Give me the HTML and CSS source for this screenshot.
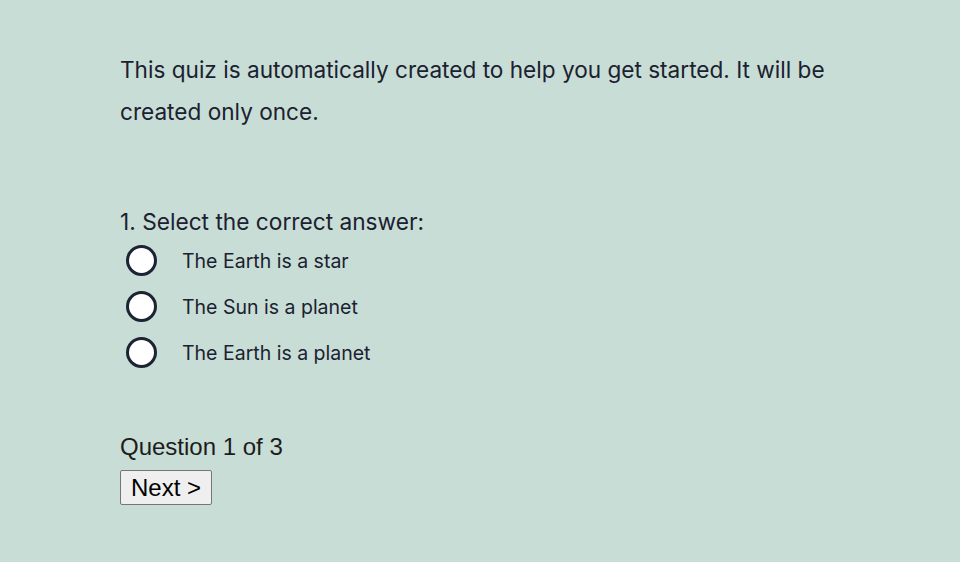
FILE: index.html
```html
<!DOCTYPE html>
<html>
<head>
<meta charset="utf-8">
<link rel="stylesheet" href="styles.css">
</head>
<body>
<main class="quiz">
  <p class="intro">This quiz is automatically created to help you get started. It will be created only once.</p>
  <section class="question">
    <h2 class="question-title">1. Select the correct answer:</h2>
    <ul class="options">
      <li class="option"><span class="radio"></span><span class="label">The Earth is a star</span></li>
      <li class="option"><span class="radio"></span><span class="label">The Sun is a planet</span></li>
      <li class="option"><span class="radio"></span><span class="label">The Earth is a planet</span></li>
    </ul>
  </section>
  <footer class="nav">
    <div class="progress">Question 1 of 3</div>
    <button class="next">Next &gt;</button>
  </footer>
</main>
</body>
</html>
```
FILE: styles.css
```css
html, body {
  margin: 0;
  padding: 0;
  background: #c8ddd5;
}
body {
  font-family: Inter, "Noto Sans", sans-serif;
  color: #1b2130;
}
.quiz {
  padding: 49px 0 0 120px;
  width: 760px;
}
.intro {
  margin: 0;
  font-size: 22.6px;
  line-height: 42px;
}
.question {
  margin-top: 75px;
}
.question-title {
  margin: 0;
  font-size: 22.7px;
  font-weight: 400;
  line-height: 28px;
}
.options {
  list-style: none;
  margin: 9px 0 0 0;
  padding: 0;
  display: flex;
  flex-direction: column;
  gap: 15px;
}
.option {
  display: flex;
  align-items: center;
  height: 31px;
}
.radio {
  box-sizing: border-box;
  width: 31px;
  height: 31px;
  border: 3px solid #1c2333;
  border-radius: 50%;
  background: #fff;
  margin-left: 6px;
  margin-right: 25px;
}
.label {
  font-size: 19.5px;
}
.nav {
  margin-top: 66px;
  font-family: "Liberation Sans", Arial, sans-serif;
  color: #1c1c1c;
}
.progress {
  font-size: 24px;
  line-height: 26px;
}
.next {
  margin-top: 10px;
  font-family: "Liberation Sans", Arial, sans-serif;
  font-size: 24px;
  color: #000;
  background: #efefef;
  border: 1px solid #767676;
  border-radius: 2px;
  width: 92px;
  height: 35px;
  padding: 0;
}
```
